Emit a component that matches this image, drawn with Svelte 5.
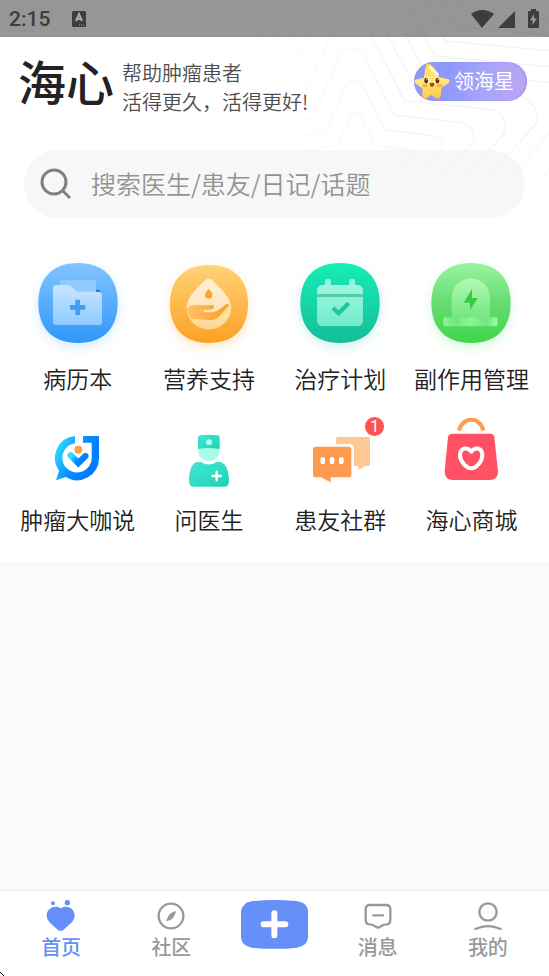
<script>
  let keyword = "";
  let active = "home";
</script>

<div class="page">
  <svg class="pattern" viewBox="0 0 1107 720" aria-hidden="true">
    <defs>
      <linearGradient id="line" gradientUnits="userSpaceOnUse" x1="150" y1="0" x2="700" y2="0">
        <stop offset="0" stop-color="#f3f3f3" stop-opacity="0" />
        <stop offset="1" stop-color="#f3f3f3" />
      </linearGradient>
    </defs>
    <g fill="none" stroke="url(#line)" stroke-width="4">
      <path d="M365 475Q360 458 380 452L472 436L512 350Q528 330 544 350L585 436L675 447Q703 456 690 475L625 550" />
      <path d="M280 420L435 397L500 254Q522 228 546 254L613 390L765 408Q797 425 781 458L685 560" />
      <path d="M215 385L400 353L482 160Q515 124 550 160L643 346L845 368Q895 390 878 425L755 560" />
      <path d="M200 340L360 312L470 70Q512 20 555 70L673 302L945 330Q990 360 970 405L805 570" />
      <path d="M170 275L320 250L440 0M568 0L703 258L1025 290Q1085 320 1068 370L875 590" />
      <path d="M160 248L283 225L383 0M623 0L734 213L1107 247" />
      <path d="M160 207L255 190L340 0M677 0L765 168L1107 200" />
      <path d="M130 165L218 150L290 0M733 0L797 123L1107 152" />
      <path d="M786 0L827 78L1107 105M837 0L855 35L1107 60" />
      <path d="M1107 400L925 600M1107 505L1065 590" />
    </g>
  </svg>

  <div class="status-bar">
    <span class="time">2:15</span>
    <svg class="keyboard" viewBox="0 0 14 16" aria-hidden="true">
      <rect width="14" height="16" rx="1.5" fill="#3d3d3d" />
      <path d="M4 10L7 3L10 10M5 8H9" fill="none" stroke="#aaa" stroke-width="2" />
      <path d="M7 14H13" stroke="#999" stroke-dasharray="1 1" />
    </svg>
    <svg class="signals" viewBox="0 0 70 22" aria-hidden="true">
      <path fill="#3d3d3d" d="M1 6Q12 -2 24 6L12 20ZM28 20L45 3V20Z" />
      <path fill="#3d3d3d" d="M61 1H66V3H68Q69 3 69 4V19Q69 20 68 20H59Q58 20 58 19V4Q58 3 59 3H61Z" />
      <path fill="#999" d="M64 6L60 12.5H63L62 17.5L67 10.5H64Z" />
    </svg>
  </div>

  <main class="panel">
    <header class="top">
      <h1 class="logo">海心</h1>
      <p class="slogan">帮助肿瘤患者<br />活得更久，活得更好!</p>
      <button class="reward" type="button">
        <svg class="star" viewBox="0 0 112 112" aria-hidden="true">
          <defs>
            <linearGradient id="starFill" x1="0" y1="0" x2="0" y2="1">
              <stop offset="0" stop-color="#ffd84f" />
              <stop offset="0.5" stop-color="#ffe978" />
              <stop offset="1" stop-color="#ffc745" />
            </linearGradient>
          </defs>
          <path fill="url(#starFill)" d="M38 3Q46 -3 57 8Q70 20 77 42L104 48Q116 52 106 62L84 76Q86 90 82 104Q77 113 67 107L54 98L38 109Q28 113 26 101L26 78L5 62Q-4 53 7 50L31 44Q34 20 38 3Z" />
          <path d="M50 12L58 20M63 24L73 34" stroke="#fffbe0" stroke-width="9" stroke-linecap="round" />
          <ellipse cx="39" cy="52" rx="9" ry="11" fill="#fff5bd" />
          <ellipse cx="73" cy="52" rx="9" ry="11" fill="#fff5bd" />
          <ellipse cx="38" cy="53" rx="6" ry="9" fill="#6e2f1d" />
          <ellipse cx="73" cy="53" rx="6" ry="9" fill="#6e2f1d" />
          <circle cx="40" cy="49" r="2" fill="#fff" />
          <circle cx="75" cy="49" r="2" fill="#fff" />
          <path fill="#9c4a22" d="M48 62Q56 58 64 62Q61 73 56 73Q50 73 48 62Z" />
          <ellipse cx="34" cy="69" rx="9" ry="5" fill="#ffae3b" />
          <ellipse cx="79" cy="69" rx="9" ry="5" fill="#ffae3b" />
        </svg>
        <span>领海星</span>
      </button>
    </header>

    <label class="search">
      <svg viewBox="0 0 32 32" aria-hidden="true">
        <circle cx="14" cy="14" r="12" />
        <path d="M22 22L30 30" />
      </svg>
      <input type="text" bind:value={keyword} placeholder="搜索医生/患友/日记/话题" aria-label="搜索" />
    </label>

    <nav class="services">
      <a class="service" href="#records">
        <svg class="icon glow-blue" viewBox="0 0 240 240" aria-hidden="true">
          <defs>
            <linearGradient id="blue" x1="0" y1="0" x2="0" y2="1">
              <stop offset="0" stop-color="#83c3ff" />
              <stop offset="1" stop-color="#2f98fa" />
            </linearGradient>
            <linearGradient id="folder" x1="0" y1="0" x2="0" y2="1">
              <stop offset="0" stop-color="#c9e6ff" />
              <stop offset="1" stop-color="#8fcaff" />
            </linearGradient>
          </defs>
          <path fill="url(#blue)" d="M120 0C196 0 239 44 239 120S196 240 120 240S1 196 1 120S44 0 120 0Z" />
          <rect x="65" y="51" width="109" height="60" rx="8" fill="#91caff" />
          <path fill="#1267c2" d="M174 81H182Q187 82 187 88H174Z" />
          <path fill="url(#folder)" d="M56 66H88Q96 66 100 70L112 82Q116 86 122 86H180Q192 86 192 98V176Q192 186 182 186H56Q45 186 45 176V77Q45 66 56 66Z" />
          <path d="M96 133H142M119 110V156" stroke="#409ff5" stroke-width="14" />
        </svg>
        <span>病历本</span>
      </a>

      <a class="service" href="#nutrition">
        <svg class="icon glow-orange" viewBox="0 0 240 240" aria-hidden="true">
          <defs>
            <linearGradient id="orange" x1="0" y1="0" x2="0" y2="1">
              <stop offset="0" stop-color="#ffd277" />
              <stop offset="1" stop-color="#fda024" />
            </linearGradient>
            <linearGradient id="drop" x1="0" y1="0" x2="0" y2="1">
              <stop offset="0" stop-color="#fff1da" />
              <stop offset="0.7" stop-color="#ffe3b4" />
              <stop offset="1" stop-color="#ffd488" />
            </linearGradient>
            <linearGradient id="hand" x1="0" y1="0" x2="1" y2="0">
              <stop offset="0" stop-color="#ffc267" />
              <stop offset="1" stop-color="#f99f28" />
            </linearGradient>
          </defs>
          <path fill="url(#orange)" d="M120 6C194 6 237 49 237 123S194 240 120 240S3 197 3 123S46 6 120 6Z" />
          <path fill="url(#drop)" d="M108 52Q119 42 130 52C158 80 186 104 186 134A66 65 0 0 1 53 134C53 104 82 78 108 52Z" />
          <path fill="#ffdf8c" d="M178 124C188 150 160 168 132 171L150 160Z" />
          <path fill="#fda52d" d="M119 77Q131 89 130 96A11 11 0 0 1 108 96Q108 89 119 77Z" />
          <path fill="url(#hand)" d="M54 134Q74 121 99 127L133 126Q138 132 131 138Q122 141 104 141Q100 145 106 147Q136 150 150 140L169 125Q180 120 180 127L149 161Q139 172 120 171L67 168Q54 153 54 134Z" />
        </svg>
        <span>营养支持</span>
      </a>

      <a class="service" href="#plan">
        <svg class="icon glow-teal" viewBox="0 0 240 240" aria-hidden="true">
          <defs>
            <linearGradient id="teal" x1="0" y1="0" x2="0" y2="1">
              <stop offset="0" stop-color="#16edb5" />
              <stop offset="1" stop-color="#16bd98" />
            </linearGradient>
            <linearGradient id="calendar" x1="0" y1="0" x2="0" y2="1">
              <stop offset="0" stop-color="#a0f5de" />
              <stop offset="1" stop-color="#70ebcb" />
            </linearGradient>
          </defs>
          <path fill="url(#teal)" d="M120 0C196 0 239 44 239 120S196 240 120 240S1 196 1 120S44 0 120 0Z" />
          <path fill="#9af5dd" d="M75 70V56A9 9 0 0 1 93 56V70ZM147 70V56A9 9 0 0 1 165 56V70Z" />
          <rect x="51" y="66" width="138" height="123" rx="16" fill="url(#calendar)" />
          <path fill="#53cdae" d="M51 93H189V102H51Z" />
          <path d="M99 135L116 151L146 121" fill="none" stroke="#20c69e" stroke-width="13" />
        </svg>
        <span>治疗计划</span>
      </a>

      <a class="service" href="#side-effects">
        <svg class="icon glow-green" viewBox="0 0 240 240" aria-hidden="true">
          <defs>
            <linearGradient id="green" x1="0" y1="0" x2="0" y2="1">
              <stop offset="0" stop-color="#99f4a2" />
              <stop offset="0.5" stop-color="#66dc70" />
              <stop offset="1" stop-color="#3dd64a" />
            </linearGradient>
            <linearGradient id="dome" x1="0" y1="0" x2="0" y2="1">
              <stop offset="0" stop-color="#b2fab8" />
              <stop offset="1" stop-color="#75e77e" />
            </linearGradient>
            <linearGradient id="base" x1="0" y1="0" x2="1" y2="0">
              <stop offset="0" stop-color="#8af394" />
              <stop offset="0.25" stop-color="#72e67c" />
              <stop offset="0.5" stop-color="#8cf895" />
              <stop offset="0.8" stop-color="#72e67c" />
              <stop offset="1" stop-color="#a0faa8" />
            </linearGradient>
          </defs>
          <path fill="url(#green)" d="M120 0C196 0 239 44 239 120S196 240 120 240S1 196 1 120S44 0 120 0Z" />
          <path fill="url(#dome)" d="M62 163V104A57 57 0 0 1 177 104V163Z" />
          <rect x="37" y="163" width="162" height="27" rx="5" fill="url(#base)" />
          <path fill="#3bc94a" d="M123 78L98 119H117V142L140 105H123Z" />
        </svg>
        <span>副作用管理</span>
      </a>

      <a class="service" href="#talks">
        <svg class="icon" viewBox="0 0 240 240" aria-hidden="true">
          <defs>
            <linearGradient id="talk" x1="0" y1="0.3" x2="0.8" y2="0.7">
              <stop offset="0" stop-color="#2bdcff" />
              <stop offset="0.6" stop-color="#078cff" />
              <stop offset="1" stop-color="#007eff" />
            </linearGradient>
          </defs>
          <path fill="url(#talk)" d="M111 96A66 66 0 0 0 63 200L54 229L83 219A66 66 0 0 0 183 162V96H135V116H161V162A44 44 0 1 1 111 118Z" />
          <path d="M98 154L121 177L142 156" fill="none" stroke="url(#talk)" stroke-width="19" stroke-linecap="round" />
          <circle cx="121" cy="137" r="12" fill="#ffa243" />
        </svg>
        <span>肿瘤大咖说</span>
      </a>

      <a class="service" href="#doctor">
        <svg class="icon" viewBox="0 0 240 240" aria-hidden="true">
          <defs>
            <linearGradient id="coat" x1="0" y1="0" x2="1" y2="1">
              <stop offset="0" stop-color="#43e7d5" />
              <stop offset="1" stop-color="#1fd1b3" />
            </linearGradient>
          </defs>
          <path fill="#a5fce9" d="M88 130H151V142A31 29 0 0 1 88 142Z" />
          <path fill="url(#coat)" d="M87 100Q87 95 92 94Q119 90 147 94Q152 95 152 100V135Q119 129 87 135Z" />
          <circle cx="120" cy="115" r="9" fill="#a9ffec" />
          <path fill="url(#coat)" d="M84 174H96Q119 189 143 174H153C173 178 180 205 180 230Q180 248 166 248H74Q60 248 60 230C60 205 66 178 84 174Z" />
          <path d="M130 216H156M143 203V229" stroke="#fff" stroke-width="7" stroke-linecap="round" />
        </svg>
        <span>问医生</span>
      </a>

      <a class="service" href="#groups">
        <svg class="icon" viewBox="0 0 240 240" aria-hidden="true">
          <path fill="#ffc794" d="M114 99H205Q210 99 210 104V181Q210 186 205 186H196L175 198V186H140L108 140V105Q108 99 114 99Z" />
          <path fill="#ff9b50" stroke="#fff" stroke-width="16" paint-order="stroke" d="M47 128H146Q154 128 154 136V212Q154 220 146 220H92V235L62 220H47Q39 220 39 212V136Q39 128 47 128Z" />
          <g fill="#fff">
            <rect x="61" y="159" width="14" height="22" rx="7" />
            <rect x="89" y="159" width="14" height="22" rx="7" />
            <rect x="117" y="159" width="14" height="22" rx="7" />
          </g>
        </svg>
        <b class="badge">1</b>
        <span>患友社群</span>
      </a>

      <a class="service" href="#shop">
        <svg class="icon" viewBox="0 0 240 240" aria-hidden="true">
          <path d="M84 80C94 36 148 36 157 80" fill="none" stroke="#ff9b50" stroke-width="12" />
          <path fill="#ff5064" d="M64 89H178Q189 89 190 100L201 202Q201 228 177 228H66Q41 228 41 202L51 100Q52 89 64 89Z" />
          <path d="M121 143C107 126 87 133 87 154C87 174 108 193 121 193C134 193 154 174 154 154C154 133 134 126 121 143Z" fill="none" stroke="#fff" stroke-width="12" stroke-linejoin="round" />
        </svg>
        <span>海心商城</span>
      </a>
    </nav>
  </main>

  <nav class="tab-bar">
    <a class="tab" class:active={active === "home"} href="#home" on:click={() => (active = "home")}>
      <svg viewBox="0 0 96 96" aria-hidden="true">
        <g fill="currentColor">
          <circle cx="24" cy="10" r="6" />
          <circle cx="67" cy="8" r="8" />
          <path d="M47 25C35 14 5 21 5 46C5 62 15 69 38 89Q47 96 56 89C79 69 89 62 89 46C89 21 60 14 47 25Z" />
        </g>
      </svg>
      首页
    </a>
    <a class="tab" class:active={active === "community"} href="#community" on:click={() => (active = "community")}>
      <svg viewBox="0 0 96 96" aria-hidden="true">
        <circle cx="48" cy="48" r="37" fill="none" stroke="currentColor" stroke-width="7" />
        <path fill="currentColor" d="M64 33Q58 50 52 56Q46 61 33 64Q38 50 44 43Q50 36 64 33Z" />
      </svg>
      社区
    </a>
    <button class="add" type="button" aria-label="发布">
      <svg viewBox="0 0 201 147" aria-hidden="true">
        <path fill="#668ffa" d="M36 3Q100 -3 165 3Q201 8 201 36V112Q200 138 168 143Q100 150 32 143Q1 138 0 112V36Q2 7 36 3Z" />
        <path d="M68 73H133M100 40V106" stroke="#fff" stroke-width="18" stroke-linecap="round" />
      </svg>
    </button>
    <a class="tab" class:active={active === "messages"} href="#messages" on:click={() => (active = "messages")}>
      <svg viewBox="0 0 96 96" aria-hidden="true">
        <path d="M24 15H72Q85 15 85 28V60Q85 72 74 73Q65 73 58 78Q48 87 38 78Q31 73 22 73Q11 72 11 60V28Q11 15 24 15ZM34 46H63" fill="none" stroke="currentColor" stroke-width="7" stroke-linecap="round" />
      </svg>
      消息
    </a>
    <a class="tab" class:active={active === "mine"} href="#mine" on:click={() => (active = "mine")}>
      <svg viewBox="0 0 96 96" aria-hidden="true">
        <circle cx="48" cy="36" r="26" fill="none" stroke="currentColor" stroke-width="7" />
        <path d="M10 87Q48 70 86 87" fill="none" stroke="currentColor" stroke-width="7" stroke-linecap="round" />
      </svg>
      我的
    </a>
  </nav>

  <svg class="pointer" viewBox="0 0 4 4" shape-rendering="crispEdges" aria-hidden="true">
    <path d="M0 0H1V1H0ZM1 1H2V2H1ZM2 2H3V3H2ZM3 3H4V4H3Z" />
  </svg>
</div>

<style>
  :global(body) {
    margin: 0;
    background: #fafafa;
  }

  .page {
    position: relative;
    display: flex;
    flex-direction: column;
    min-height: 100vh;
    overflow: hidden;
    font-family: "Noto Sans CJK SC", sans-serif;
    font-weight: 350;
    color: #222;
  }

  .pattern {
    position: absolute;
    top: 0;
    right: 0;
    z-index: 1;
    width: 369px;
    height: 240px;
    pointer-events: none;
    mask-image: linear-gradient(#000 55%, transparent 82%);
  }

  .status-bar {
    z-index: 1;
    display: flex;
    align-items: center;
    height: 37px;
    padding: 0 9px;
    background: rgba(0, 0, 0, 0.4);
    color: #3d3d3d;
    font-family: Roboto, sans-serif;
    font-size: 21px;
    font-weight: 500;
  }

  .keyboard {
    width: 14px;
    height: 16px;
    margin-left: 22px;
  }

  .signals {
    width: 70px;
    height: 22px;
    margin-left: auto;
  }

  .panel {
    padding-bottom: 43px;
    background: #fff;
  }

  .top {
    display: flex;
    align-items: flex-start;
    height: 71px;
    padding: 21px 22px 0 18px;
  }

  .logo {
    margin: 0;
    font-size: 48px;
    line-height: 44px;
    font-weight: 500;
  }

  .slogan {
    z-index: 2;
    margin: 0 0 0 8px;
    font-size: 20px;
    line-height: 29px;
    color: #4d4d4d;
    white-space: nowrap;
  }

  .reward {
    z-index: 2;
    display: flex;
    align-items: center;
    gap: 4px;
    height: 39px;
    margin: 4px 0 0 auto;
    padding: 0 13px 0 0;
    border: 0;
    border-radius: 20px;
    background: linear-gradient(100deg, #8f98fa 30%, #a8a5fb 65%, #bda6ee);
    box-shadow: inset -1px 0 2px #8f92f8;
    color: #fff;
    font: 20px/38px "Noto Sans CJK SC", sans-serif;
  }

  .reward span {
    height: 39px;
  }

  .star {
    width: 36px;
    height: 37px;
  }

  .search {
    display: flex;
    align-items: center;
    gap: 19px;
    height: 68px;
    margin: 21px 24px 0;
    padding: 0 16px;
    border-radius: 34px;
    background: #f7f7f7;
  }

  .search svg {
    flex: none;
    width: 32px;
    height: 32px;
    fill: none;
    stroke: #808080;
    stroke-width: 3;
  }

  .search input {
    flex: 1;
    min-width: 0;
    padding: 0 0 2px;
    border: 0;
    outline: 0;
    background: transparent;
    color: #2b2b2b;
    font: 350 25px/36px "Noto Sans CJK SC", sans-serif;
  }

  .search input::placeholder {
    color: #949494;
    opacity: 1;
  }

  .services {
    display: grid;
    grid-template-columns: repeat(4, 1fr);
    row-gap: 26px;
    margin-top: 45px;
    padding: 0 12px;
  }

  .service {
    position: relative;
    display: flex;
    flex-direction: column;
    align-items: center;
    gap: 18px;
    color: inherit;
    font-size: 23px;
    text-decoration: none;
    white-space: nowrap;
  }

  .service span {
    height: 17px;
    line-height: 34px;
  }

  .icon {
    width: 80px;
    height: 80px;
    overflow: visible;
  }

  .glow-blue {
    filter: drop-shadow(0 4px 6px rgba(47, 152, 250, 0.2));
  }

  .glow-orange {
    filter: drop-shadow(0 4px 6px rgba(253, 160, 36, 0.25));
  }

  .glow-teal {
    filter: drop-shadow(0 4px 6px rgba(22, 200, 160, 0.2));
  }

  .glow-green {
    filter: drop-shadow(0 4px 6px rgba(61, 214, 74, 0.2));
  }

  .badge {
    position: absolute;
    top: 13px;
    left: calc(50% + 25px);
    width: 19px;
    border-radius: 10px;
    background: #ff5252;
    color: #fff;
    font: 16px/19px Roboto, sans-serif;
    text-align: center;
  }

  .tab-bar {
    display: grid;
    grid-template-columns: 1fr 1fr 96px 1fr 1fr;
    align-items: start;
    margin-top: auto;
    padding: 9px 6px 16px;
    border-top: 2px solid #f0f0f0;
    background: #fff;
  }

  .tab {
    display: flex;
    flex-direction: column;
    align-items: center;
    gap: 2px;
    color: #999;
    font-size: 20px;
    line-height: 26px;
    font-weight: 500;
    text-decoration: none;
  }

  .tab svg {
    width: 32px;
    height: 32px;
  }

  .tab.active {
    color: #668ffa;
  }

  .add {
    justify-self: center;
    padding: 0;
    border: 0;
    background: none;
  }

  .add svg {
    display: block;
    width: 67px;
    height: 49px;
  }

  .pointer {
    position: absolute;
    bottom: 0;
    left: 0;
    width: 4px;
    height: 4px;
  }
</style>
